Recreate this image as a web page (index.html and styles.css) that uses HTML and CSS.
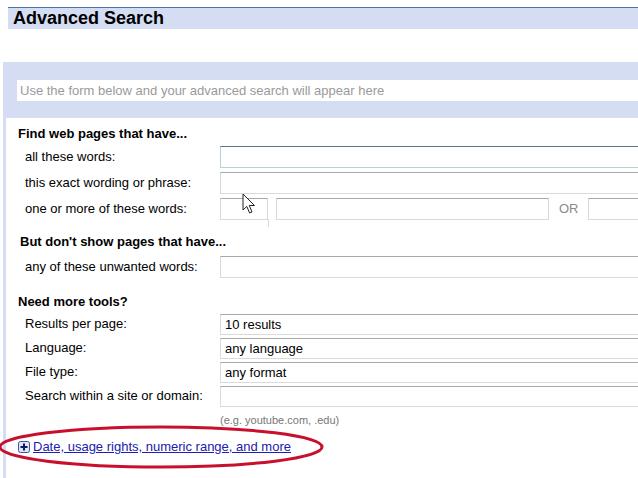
FILE: index.html
```html
<!DOCTYPE html>
<html>
<head>
<meta charset="utf-8">
<link rel="stylesheet" href="styles.css">
</head>
<body>
<div class="titlebar"><h1 class="title">Advanced Search</h1></div>

<div class="querypanel">
  <div class="querybox">Use the form below and your advanced search will appear here</div>
</div>

<div class="content">
  <div class="heading h1st">Find web pages that have...</div>
  <div class="row">
    <div class="label">all these words:</div>
    <div class="field focus"></div>
  </div>
  <div class="row">
    <div class="label">this exact wording or phrase:</div>
    <div class="field"></div>
  </div>
  <div class="row">
    <div class="label">one or more of these words:</div>
    <div class="orgroup">
      <div class="field small"></div>
      <div class="field mid"></div>
      <span class="or">OR</span>
      <div class="field rest"></div>
    </div>
  </div>

  <div class="heading h2nd">But don't show pages that have...</div>
  <div class="row">
    <div class="label">any of these unwanted words:</div>
    <div class="field"></div>
  </div>

  <div class="heading h3rd">Need more tools?</div>
  <div class="row srow">
    <div class="label">Results per page:</div>
    <div class="field sel">10 results</div>
  </div>
  <div class="row srow">
    <div class="label">Language:</div>
    <div class="field sel">any language</div>
  </div>
  <div class="row srow">
    <div class="label">File type:</div>
    <div class="field sel">any format</div>
  </div>
  <div class="row srow">
    <div class="label">Search within a site or domain:</div>
    <div class="field sel"></div>
  </div>
  <div class="hint">(e.g. youtube.com, .edu)</div>

  <div class="more">
    <span class="plus"><svg width="12" height="12" viewBox="0 0 12 12"><rect x="0.5" y="0.5" width="11" height="11" rx="2" fill="#dfe6f7" stroke="#3b4f9a"/><path d="M6 2.5V9.5M2.5 6H9.5" stroke="#111a66" stroke-width="2"/></svg></span>
    <a class="morelink" href="#">Date, usage rights, numeric range, and more</a>
  </div>
</div>

<svg class="ring" width="330" height="50" viewBox="0 0 330 50"><ellipse cx="163" cy="24" rx="161" ry="20" fill="none" stroke="#c8102e" stroke-width="3"/></svg>

<svg class="cursor" width="14" height="22" viewBox="0 0 14 22"><path d="M1 1V17L4.8 13.4L7.6 20L10 19L7.3 12.5H12.5Z" fill="#fff" stroke="#222" stroke-width="1" stroke-linejoin="round"/></svg>
<div class="artifact"></div>
</body>
</html>
```

FILE: styles.css
```css
html, body {
  margin: 0;
  padding: 0;
  background: #fff;
  overflow: hidden;
  width: 638px;
  height: 478px;
}
body {
  font-family: "Liberation Sans", Arial, sans-serif;
  font-size: 13px;
  color: #000;
  position: relative;
}
.titlebar {
  margin: 7px 0 0 8px;
  border-top: 1px solid #4a72b0;
  background: #d5ddf3;
  height: 21px;
}
.title {
  margin: 0;
  padding-left: 5px;
  font-size: 18px;
  line-height: 21px;
  font-weight: bold;
}
.querypanel {
  margin: 33px 0 0 3px;
  background: #d5ddf3;
  padding: 18px 0 17px 14px;
}
.querybox {
  background: #fff;
  height: 21px;
  line-height: 21px;
  padding-left: 3px;
  color: #9a9a9a;
  font-size: 13px;
}
.content {
  margin-left: 3px;
  border-left: 3px solid #d5ddf3;
  padding-left: 12px;
  height: 360px;
}
.heading {
  font-weight: bold;
  line-height: 16px;
}
.h1st { padding-top: 8px; margin-bottom: 2px; }
.h2nd { padding-top: 12px; margin-bottom: 4px; padding-left: 2px; }
.h3rd { padding-top: 14px; margin-bottom: 2px; }
.row {
  display: flex;
  align-items: center;
  height: 26px;
}
.srow { height: 24px; }
.label {
  width: 195px;
  padding-left: 7px;
  flex: none;
  line-height: 16px;
}
.field {
  box-sizing: border-box;
  height: 22px;
  width: 440px;
  flex: none;
  border: 1px solid #dadada;
  border-top-color: #a9a9a9;
  background: #fff;
  line-height: 20px;
  padding-left: 4px;
}
.field.focus {
  border-color: #b5d0d8;
  border-top-color: #587888;
}
.sel { height: 21px; line-height: 19px; }
.orgroup {
  display: flex;
  align-items: center;
  flex: none;
  width: 440px;
}
.field.small { width: 48px; }
.field.mid { width: 273px; margin-left: 8px; }
.or {
  color: #8a8a8a;
  margin: 0 9px 0 10px;
  line-height: 16px;
}
.field.rest { width: 80px; }
.hint {
  padding: 5px 0 0 202px;
  font-size: 11px;
  line-height: 14px;
  color: #777;
}
.more {
  display: flex;
  align-items: center;
  margin-top: 12px;
  height: 16px;
}
.plus {
  display: flex;
  width: 12px;
  height: 12px;
  margin-right: 3px;
}
.morelink {
  color: #1a0dab;
  color: #2020b0;
  text-decoration: underline;
  line-height: 16px;
}
.ring {
  position: absolute;
  left: -2px;
  top: 423px;
}
.cursor {
  position: absolute;
  left: 242px;
  top: 193px;
}
.artifact {
  position: absolute;
  left: 268px;
  top: 219px;
  width: 1px;
  height: 8px;
  background: #d8d8d8;
}
```
